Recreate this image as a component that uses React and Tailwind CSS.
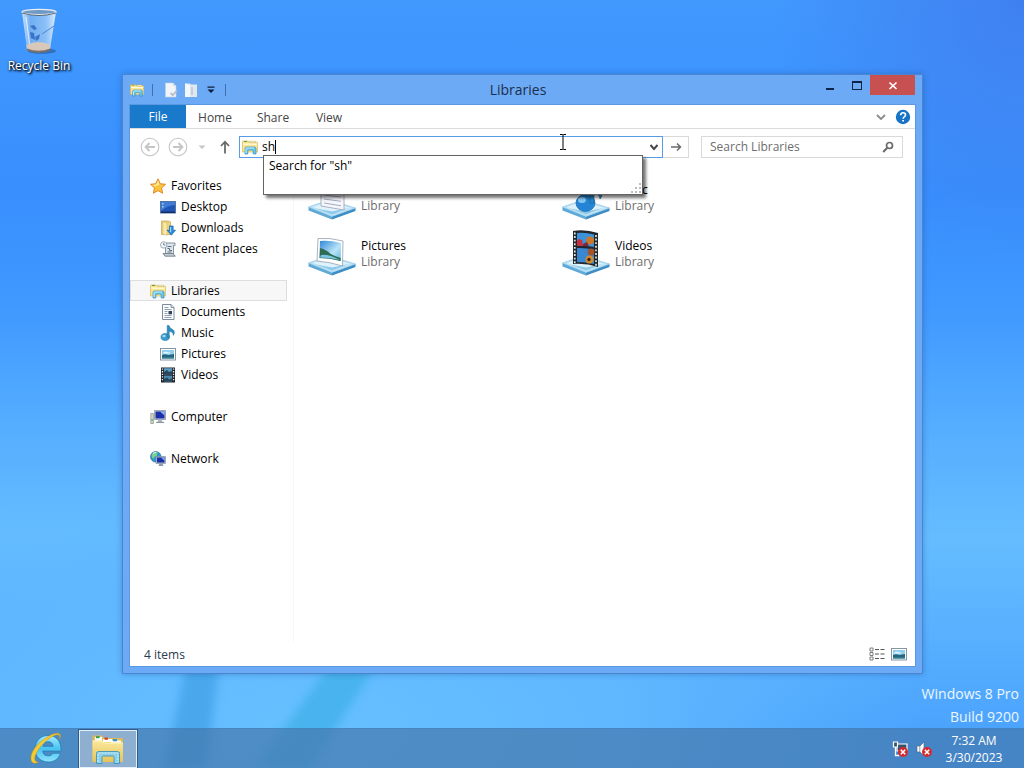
import React, { useState } from "react";

const LibraryIcon = ({ className }) => (
  <svg className={className} viewBox="0 0 16 16" aria-hidden="true">
    <path d="M0.5 13V2.8Q0.5 2 1.3 2H6l1 1.2h7.7q.8 0 .8.8v9z" fill="#fbe48c" stroke="#d3b050" strokeWidth="0.6" />
    <path d="M1.2 5.2h13.6" stroke="#fffbe0" strokeWidth="1.3" />
    <path d="M7 2.2h6.5v1.4H8z" fill="#fff8d2" stroke="#b9a35a" strokeWidth="0.4" />
    <path d="M2 2.5h3" stroke="#52a54a" strokeWidth="1" />
    <path d="M3 15V9.6Q3 8 4.6 8h7.8Q14 8 14 9.6V15h-2.8v-2.8q0-1.2-1.2-1.2H7q-1.2 0-1.2 1.2V15z" fill="#6cc6ee" stroke="#2f8fc0" strokeWidth="0.7" />
    <path d="M4 14V9.8Q4 9 5 9h7" fill="none" stroke="#d0f2ff" strokeWidth="0.9" />
  </svg>
);

const BigFolderIcon = ({ className }) => (
  <svg className={className} viewBox="0 0 34 30" aria-hidden="true">
    <defs>
      <linearGradient id="bigFolder" x1="0" y1="0" x2="0" y2="1">
        <stop offset="0" stopColor="#fbe99c" />
        <stop offset="1" stopColor="#e5c35a" />
      </linearGradient>
    </defs>
    <path d="M1.5 27V2.5Q1.5 1.5 2.5 1.5H11l2 2.5h18q1 0 1 1V27z" fill="#e0bb55" />
    <path d="M4 3h7v4H4z" fill="#fff" />
    <path d="M5 2.2h3.5v2H5z" fill="#2f9c4c" />
    <path d="M12 5h9v3h-9z" fill="#fff" />
    <path d="M13.5 3.5h3.5v2.3h-3.5z" fill="#d0452e" />
    <path d="M20 6.5h10v3H20z" fill="#fff" />
    <path d="M22 5h4v2.3h-4z" fill="#3a93cf" />
    <path d="M1.5 6.5H11l2.5 2h18.5V28H1.5z" fill="url(#bigFolder)" />
    <path d="M2 7h9l2.5 2h18" fill="none" stroke="#fff7c9" strokeWidth="0.8" />
    <path d="M5.5 29.5V19.5q0-2 2-2h19q2 0 2 2v10H23v-6q0-1.5-1.5-1.5h-9Q11 22 11 23.5v6z" fill="#8bd0e8" stroke="#3f94b9" strokeWidth="0.9" />
    <path d="M7 28V20q0-1 1-1h18q1 0 1 1v8" fill="none" stroke="#dff6fc" strokeWidth="0.9" strokeDasharray="2 1" />
  </svg>
);

const StarIcon = () => (
  <svg className="w-4 h-4" viewBox="0 0 16 16" aria-hidden="true">
    <path d="M8 .8l2.2 4.9 5.3.6-3.9 3.6 1 5.3L8 12.6l-4.6 2.6 1-5.3L.5 6.3l5.3-.6z" fill="#fcc23a" stroke="#dc7f1e" strokeWidth="0.9" strokeLinejoin="round" />
    <path d="M8 2.6l1.5 3.9L5 8.5 2.3 6.9l4-.5z" fill="#ffeb9c" />
  </svg>
);

const DesktopIcon = () => (
  <svg className="w-4 h-4" viewBox="0 0 16 16" aria-hidden="true">
    <rect x="0.5" y="2.5" width="15" height="11.5" fill="#1f55b5" stroke="#55749f" />
    <path d="M1 3h14v3Q8 6 1 12z" fill="#3f7cd6" />
    <path d="M1 12.6h14v1.4H1z" fill="#0f2d63" />
    <path d="M2 4h1.5v1.5H2zM2 7h1.5v1.5H2z" fill="#a9cdf5" />
  </svg>
);

const DownloadsIcon = () => (
  <svg className="w-4 h-4" viewBox="0 0 16 16" aria-hidden="true">
    <path d="M1.5 1h7l2 1v12.5h-9z" fill="#ecd27a" stroke="#c3a24a" strokeWidth="0.7" />
    <path d="M3 1.5l4 1.5v12.5l-4-1.5z" fill="#f9eaa9" stroke="#d2b660" strokeWidth="0.5" />
    <path d="M9.5 6h3.6v4.2h2.4l-4.2 5-4.2-5h2.4z" fill="#2f8fe0" stroke="#1a5ea6" strokeWidth="0.7" />
    <path d="M10.6 7v5" stroke="#a8dcff" />
  </svg>
);

const RecentIcon = () => (
  <svg className="w-4 h-4" viewBox="0 0 16 16" aria-hidden="true">
    <path d="M5.5 2h9.5v2.5h-1.5V13H5.5z" fill="#dfe6eb" stroke="#7c8993" strokeWidth="0.9" />
    <path d="M3 12.5h10l2.3 2.7H5z" fill="#c0cad2" stroke="#74818b" strokeWidth="0.9" />
    <path d="M7.5 5.5h4M7.5 7.5h2v2h2.5M7.5 11h4" fill="none" stroke="#5a7485" />
    <circle cx="3.7" cy="3.9" r="3.2" fill="#f6f9fb" stroke="#8998a3" strokeWidth="0.8" />
    <path d="M3.7 2v2h1.6" fill="none" stroke="#4d5b66" strokeWidth="0.8" />
  </svg>
);

const DocumentIcon = () => (
  <svg className="w-4 h-4" viewBox="0 0 16 16" aria-hidden="true">
    <path d="M2.5.5h8.5l3 3v12H2.5z" fill="#fcfdff" stroke="#6f7f93" strokeWidth="0.9" />
    <path d="M11 .5v3h3" fill="#d5deea" stroke="#6f7f93" strokeWidth="0.8" />
    <path d="M4.5 3.5h4M4.5 5.5h7M4.5 7.5h3M4.5 9.5h3M4.5 11.5h7M4.5 13.5h7" stroke="#8795a8" strokeWidth="0.9" />
    <path d="M8.5 7h3.5v3.3H8.5z" fill="#2c4360" />
  </svg>
);

const MusicIcon = () => (
  <svg className="w-4 h-4" viewBox="0 0 16 16" aria-hidden="true">
    <ellipse cx="5.2" cy="12" rx="4.2" ry="3.4" fill="#3b9fd0" stroke="#1f6e9c" strokeWidth="0.6" />
    <path d="M7.2.5h1.8q.5 2.6 3.2 3.8 3.6 1.7 1.2 6.2.2-3.4-4.2-4.2V12.5H7.2z" fill="#2b8fc4" stroke="#1f6e9c" strokeWidth="0.5" />
    <ellipse cx="4" cy="11" rx="1.7" ry="1" fill="#b3e3f8" />
  </svg>
);

const PictureIcon = ({ className }) => (
  <svg className={className} viewBox="0 0 16 16" aria-hidden="true">
    <rect x="0.5" y="2.5" width="15" height="11.5" fill="#fff" stroke="#7b8b99" strokeWidth="0.9" />
    <rect x="2" y="4" width="12" height="8.5" fill="#8fd0ef" />
    <path d="M3 7q2-2 4-1t3 0v1.5H3z" fill="#eaf8ff" />
    <path d="M2 9q3-1.5 6 0 3-.5 6-1v4.500H2z" fill="#27657c" />
    <path d="M2 11.5h12v1H2z" fill="#4796a6" />
  </svg>
);

const VideoIcon = () => (
  <svg className="w-4 h-4" viewBox="0 0 16 16" aria-hidden="true">
    <rect x="1" y="0.5" width="14" height="15" fill="#20262d" />
    <rect x="4" y="1.2" width="8" height="6.2" fill="#5b9cc2" />
    <rect x="4" y="8.6" width="8" height="6.2" fill="#4c87ad" />
    <path d="M4 5l3-2 2 2 3-1v3.4H4zM4 12l3-1.500 2 2 3-1v3.300H4z" fill="#294759" />
    <path d="M2.5 1.5v13M13.5 1.5v13" stroke="#e6ecf0" strokeWidth="1.3" strokeDasharray="1.3 1.3" />
  </svg>
);

const ComputerIcon = () => (
  <svg className="w-4 h-4" viewBox="0 0 16 16" aria-hidden="true">
    <path d="M.8 4.500h2.600v10H.8z" fill="#d3d9cf" stroke="#84907f" strokeWidth="0.7" />
    <path d="M1.2 11h1.8" stroke="#3ca83e" />
    <path d="M4.5 1.5h11v9h-11z" fill="#c8d2dd" stroke="#7c8b9b" strokeWidth="0.7" />
    <path d="M5.5 2.5h9v7h-9z" fill="#1c2fa8" />
    <path d="M10 2.5h4.5v4z" fill="#8db2f4" />
    <path d="M8.5 10.5h3l1.5 3H7z" fill="#aab4c0" />
    <path d="M6 13h8v1H6z" fill="#8793a2" />
  </svg>
);

const NetworkIcon = () => (
  <svg className="w-4 h-4" viewBox="0 0 16 16" aria-hidden="true">
    <circle cx="5.8" cy="5.8" r="5.3" fill="#2f95cf" stroke="#1f6799" strokeWidth="0.6" />
    <path d="M2 3q3-3 6-1.5Q6 3 7 5 4 5 3.5 8 1 6 2 3z" fill="#7bd18a" />
    <path d="M3 2.5q1.5-1.2 3-1" stroke="#e5faff" fill="none" />
    <path d="M6 5.500h9.500v7H6z" fill="#c8d2dd" stroke="#6f7f92" strokeWidth="0.6" />
    <path d="M6.9 6.400h7.700v5.200H6.900z" fill="#1a2ea6" />
    <path d="M11 6.400h3.600v3.600z" fill="#7fa8f2" />
    <path d="M9.500 12.500h3l1 2.500H8.500z" fill="#8d9aab" />
  </svg>
);

// Glass tray that every large library icon stands on
const Tray = () => (
  <>
    <path d="M.5 33L24 42.500v3L.5 36.500z" fill="#5fa9d6" />
    <path d="M24 42.500L47.500 34v3L24 45.500z" fill="#3d8dc4" />
    <path d="M.5 33L21 26l26.500 8L24 42.500z" fill="#bfe3f6" stroke="#7fbde0" strokeWidth="0.6" />
    <path d="M5 33l16-5.500L42 34l-18 6.500z" fill="#dff2fb" />
    <path d="M8 34.500l16 6L41 34l-17 3.500z" fill="#8ac9ea" />
  </>
);

const DocumentsLibraryIcon = () => (
  <svg className="w-12 h-12" viewBox="0 0 48 48" aria-hidden="true">
    <Tray />
    <path d="M13 5l23 2v29l-23-4z" fill="#f5f6fb" stroke="#9a9fb5" strokeWidth="0.8" />
    <path d="M16 13l17 1.5M16 17l17 1.5M16 21l17 2M16 25l17 2.3M16 29l17 2.8" stroke="#a5a9c0" />
  </svg>
);

const MusicLibraryIcon = () => (
  <svg className="w-12 h-12" viewBox="0 0 48 48" aria-hidden="true">
    <Tray />
    <ellipse cx="23.500" cy="29" rx="9.500" ry="8.500" fill="#2485d6" stroke="#1766ab" strokeWidth="0.7" />
    <ellipse cx="20" cy="26" rx="4" ry="3" fill="#86c9f5" />
    <path d="M28 6h4q1 7 6 10 4 4 0 9 0-5-6-6v10h-4z" fill="#2b88c9" stroke="#1b5f94" strokeWidth="0.6" />
  </svg>
);

const PicturesLibraryIcon = () => (
  <svg className="w-12 h-12" viewBox="0 0 48 48" aria-hidden="true">
    <defs>
      <linearGradient id="photoSky" x1="0" y1="0" x2="1" y2="1">
        <stop offset="0" stopColor="#2f86d8" />
        <stop offset="0.6" stopColor="#b9e4f8" />
        <stop offset="1" stopColor="#5fb3dc" />
      </linearGradient>
    </defs>
    <Tray />
    <path d="M10 8.500Q22 7.500 35 11l-.5 25Q22 32 9 31z" fill="#fff" stroke="#8fa0ae" strokeWidth="0.8" />
    <path d="M12 11Q22 10 33 13l-.3 18Q22 28 11.500 28z" fill="url(#photoSky)" />
    <path d="M12 18q7 2 10 5.500 5 3 10.600 4.500v3Q22 28 11.500 28z" fill="#2d6b52" />
    <path d="M13 25q8-1 19 5-9-2.500-20-2.500z" fill="#79c4e0" />
  </svg>
);

const VideosLibraryIcon = () => (
  <svg className="w-12 h-12" viewBox="0 0 48 48" aria-hidden="true">
    <Tray />
    <path d="M11 1q12-2 25 2v34q-12-4-25-3z" fill="#23272d" />
    <path d="M15 3q8-1 17 1.500V17q-8-2-17-1.500z" fill="#3d93db" />
    <path d="M15 18q8-.5 17 1.500v14.500q-8-2-17-2z" fill="#3787d2" />
    <path d="M17 9l3 1 1 6-6-.3v-5z" fill="#c6303c" />
    <circle cx="28" cy="10.500" r="4" fill="#c9772b" />
    <path d="M21 14l4-2 2 4.500-6-.7z" fill="#7a263b" />
    <circle cx="29" cy="22" r="3.500" fill="#a5542a" />
    <circle cx="27.500" cy="29.500" r="4" fill="#d28a2e" />
    <circle cx="27" cy="29.500" r="1.700" fill="#3a2213" />
    <path d="M12.800 2.500v31M34 5v31" stroke="#d9e8e0" strokeWidth="1.700" strokeDasharray="1.900 1.700" />
  </svg>
);

const RecycleBinIcon = () => (
  <svg className="w-12 h-12" viewBox="0 0 48 48" aria-hidden="true">
    <defs>
      <linearGradient id="binGlass" x1="0" y1="0" x2="1" y2="0">
        <stop offset="0" stopColor="#d6e9fb" stopOpacity="0.95" />
        <stop offset="0.25" stopColor="#85b8ee" stopOpacity="0.7" />
        <stop offset="0.7" stopColor="#a5cdf5" stopOpacity="0.75" />
        <stop offset="1" stopColor="#e7f2fc" stopOpacity="0.95" />
      </linearGradient>
    </defs>
    <ellipse cx="27" cy="43" rx="14" ry="3" fill="#23446f" opacity="0.45" />
    <path d="M7 4l5 37q11 5 23 0l6-37z" fill="url(#binGlass)" />
    <path d="M11.500 37q12-6 24 0l-.6 5q-11.500 4.500-23 0z" fill="#d8c8b9" />
    <path d="M11.800 40.500q12 4.500 23.400 0l-.3 2q-11.500 4.500-22.800 0z" fill="#7b6d68" />
    <path d="M15 18l4-1 3 4-3 1zM15 24l4 1 1 7-4-2zM20 29l5-3-1 5-3 2z" fill="#2a63bd" opacity="0.8" />
    <path d="M27 26l12-8" stroke="#4a7fc2" strokeWidth="0.9" />
    <path d="M11 9l3.500 27" stroke="#fff" strokeOpacity="0.7" strokeWidth="1.2" />
    <ellipse cx="24" cy="4" rx="17" ry="2.600" fill="#6f9ac6" stroke="#e9eff4" strokeWidth="1.300" />
    <path d="M7 5q17 5 34 0" fill="none" stroke="#4b5968" strokeWidth="0.9" />
  </svg>
);

const ExplorerEIcon = () => (
  <svg className="w-9 h-9" viewBox="0 0 36 36" aria-hidden="true">
    <defs>
      <linearGradient id="ieBlue" x1="0" y1="0" x2="0" y2="1">
        <stop offset="0" stopColor="#a5ecff" />
        <stop offset="0.5" stopColor="#48c3f2" />
        <stop offset="1" stopColor="#8fe2fc" />
      </linearGradient>
    </defs>
    <path fillRule="evenodd" d="M19 4.500C11 4.500 6 11 6 17.800 6 25.500 11.500 31 19.300 31c6 0 10.400-3 12.200-8.800h-7.600c-1 1.800-2.500 2.600-4.600 2.600-3.300 0-5.300-1.500-5.500-4.800h18.300C32.500 10.500 27.500 4.500 19 4.500zM13.900 15.300c.7-3 2.500-4.600 5.300-4.600 2.700 0 4.500 1.600 5 4.600z" fill="url(#ieBlue)" stroke="#1c7fb8" strokeWidth="0.8" />
    <path d="M30.500 8.500C33.500 2 29 0 20 5 8 11.500 1 21.500 2 28.500c.6 4 4 4.500 7.500 2.700C5 31 4.500 27 8 21 12 13.500 20 6.500 26.500 4c4-1.200 5 1 4 4.500z" fill="#f5cb32" stroke="#c2921a" strokeWidth="0.5" />
  </svg>
);

const navGroups = [
  { label: "Favorites", icon: <StarIcon />, items: [
    { label: "Desktop", icon: <DesktopIcon /> },
    { label: "Downloads", icon: <DownloadsIcon /> },
    { label: "Recent places", icon: <RecentIcon /> },
  ] },
  { label: "Libraries", icon: <LibraryIcon className="w-4 h-4" />, active: true, items: [
    { label: "Documents", icon: <DocumentIcon /> },
    { label: "Music", icon: <MusicIcon /> },
    { label: "Pictures", icon: <PictureIcon className="w-4 h-4" /> },
    { label: "Videos", icon: <VideoIcon /> },
  ] },
  { label: "Computer", icon: <ComputerIcon />, items: [] },
  { label: "Network", icon: <NetworkIcon />, items: [] },
];

const libraries = [
  { name: "Documents", icon: <DocumentsLibraryIcon /> },
  { name: "Music", icon: <MusicLibraryIcon /> },
  { name: "Pictures", icon: <PicturesLibraryIcon /> },
  { name: "Videos", icon: <VideosLibraryIcon /> },
];

const TitleBar = () => (
  <div className="flex h-[30px] shrink-0 items-start">
    <div className="flex h-[30px] w-24 items-center gap-2">
      <LibraryIcon className="w-4 h-4" />
      <span className="w-px h-3 bg-[#3f6fae]" />
      <button type="button" aria-label="Properties" className="ml-0.5">
        <svg className="w-4 h-4" viewBox="0 0 16 16">
          <path d="M2.5 1h7.5l3 3v11H2.5z" fill="#f1f4f8" stroke="#c4d0df" strokeWidth="0.6" />
          <path d="M10 1v3h3" fill="#cfd8e3" />
          <path d="M7.500 11l2.200 2.200L14 8.500" fill="none" stroke="#b4bfcc" strokeWidth="1.8" />
        </svg>
      </button>
      <button type="button" aria-label="New folder" className="-ml-1">
        <svg className="w-4 h-4" viewBox="0 0 16 16">
          <path d="M2 1.5h5l1 1h6V15H2z" fill="#e0e7ef" />
          <path d="M2 1.5l5 1.5v12H2z" fill="#f4f7fa" />
          <path d="M8 5h2v8H8z" fill="#c3cedb" />
        </svg>
      </button>
      <button type="button" aria-label="Customize toolbar">
        <svg className="w-2 h-2" viewBox="0 0 8 8">
          <path d="M.5.5h7v1.200h-7zM.5 3.500h7L4 7z" fill="#0d1e3c" />
        </svg>
      </button>
      <span className="ml-0.5 w-px h-3 shrink-0 bg-[#3f6fae]" />
    </div>
    <h1 className="flex-1 text-center text-sm leading-[30px] text-[#1c2f4a]">Libraries</h1>
    <div className="flex pl-1.5">
      <button type="button" aria-label="Minimize" className="w-[27px] h-5">
        <svg className="mx-auto w-3 h-5" viewBox="0 0 12 20">
          <path d="M2 13h8v2H2z" fill="#0f2547" />
        </svg>
      </button>
      <button type="button" aria-label="Maximize" className="w-[27px] h-5">
        <svg className="mx-auto w-3 h-5" viewBox="0 0 12 20">
          <path fillRule="evenodd" d="M1 6h10v9H1zM2 8v6h8V8z" fill="#0f2547" />
        </svg>
      </button>
      <button type="button" aria-label="Close" className="w-[45px] h-5 bg-[#c75050]">
        <svg className="mx-auto w-3 h-5" viewBox="0 0 12 20">
          <path d="M2.500 7.500l7 6.500M9.500 7.500l-7 6.500" stroke="#fff" strokeWidth="1.700" />
        </svg>
      </button>
    </div>
  </div>
);

const RibbonTabs = () => (
  <div className="flex h-6 shrink-0 items-stretch border-b border-[#dadbdc] text-xs text-[#444]">
    <button type="button" className="w-14 bg-[#1979ca] text-white">File</button>
    <button type="button" className="w-[58px] pt-0.5">Home</button>
    <button type="button" className="w-[58px] pt-0.5">Share</button>
    <button type="button" className="w-[54px] pt-0.5">View</button>
    <div className="ml-auto flex items-center gap-2 pr-1">
      <button type="button" aria-label="Expand the Ribbon">
        <svg className="w-3 h-3" viewBox="0 0 12 12">
          <path d="M2 4l4 4 4-4" fill="none" stroke="#8a8a8a" strokeWidth="1.8" />
        </svg>
      </button>
      <button type="button" aria-label="Help">
        <svg className="w-4 h-4" viewBox="0 0 16 16">
          <circle cx="8" cy="8" r="7.2" fill="#1673c6" />
          <path d="M5.600 6.200Q5.800 3.800 8.100 3.800q2.400 0 2.400 2 0 1.200-1.200 2Q8.100 8.600 8.100 9.800" fill="none" stroke="#fff" strokeWidth="1.6" />
          <path d="M7.200 10.900H9v1.700H7.200z" fill="#fff" />
        </svg>
      </button>
    </div>
  </div>
);

const AddressBar = ({ query, onChange }) => (
  <div className="flex h-9 shrink-0 items-center">
    <button type="button" aria-label="Back" className="ml-2.5">
      <svg className="w-5 h-5" viewBox="0 0 20 20">
        <circle cx="10" cy="10" r="8.8" fill="none" stroke="#c6c6c6" strokeWidth="1.1" />
        <path d="M15 10H6M9.500 6L5.700 10l3.800 4" fill="none" stroke="#c6c6c6" strokeWidth="2" />
      </svg>
    </button>
    <button type="button" aria-label="Forward" className="ml-2">
      <svg className="w-5 h-5" viewBox="0 0 20 20">
        <circle cx="10" cy="10" r="8.8" fill="none" stroke="#c6c6c6" strokeWidth="1.1" />
        <path d="M5 10h9M10.500 6l3.800 4-3.800 4" fill="none" stroke="#c6c6c6" strokeWidth="2" />
      </svg>
    </button>
    <button type="button" aria-label="Recent locations" className="ml-2.5">
      <svg className="w-2 h-2" viewBox="0 0 8 8">
        <path d="M.5 2.500h7L4 6z" fill="#c6c6c6" />
      </svg>
    </button>
    <button type="button" aria-label="Up" className="ml-3">
      <svg className="w-3.5 h-3.5" viewBox="0 0 14 14">
        <path d="M7 13.500V2M3 6l4-4.300L11 6" fill="none" stroke="#6a6a6a" strokeWidth="1.8" />
      </svg>
    </button>
    <div className="relative ml-[7px] flex h-[22px] flex-1 items-center border border-[#569de5] bg-white pl-0.5">
      <LibraryIcon className="w-4 h-4" />
      <input
        type="text"
        aria-label="Address"
        value={query}
        onChange={(e) => onChange(e.target.value)}
        className="ml-1 field-sizing-content text-xs text-black outline-none"
      />
      <span className="w-px h-3.5 bg-black" />
      <button type="button" aria-label="Previous locations" className="ml-auto mr-0.5">
        <svg className="w-3 h-3" viewBox="0 0 12 12">
          <path d="M2.500 4L6 8l3.500-4" fill="none" stroke="#444" strokeWidth="1.900" />
        </svg>
      </button>

      {/* Suggestions */}
      <div className="absolute left-[23px] right-[19px] top-[18px] z-20 h-10 border border-[#646464] bg-white px-[5px] text-xs leading-5 text-black shadow-[3px_3px_3px_rgba(0,0,0,0.55)]">
        Search for "{query}"
        <svg className="absolute bottom-0 right-0 w-3 h-3" viewBox="0 0 12 12" aria-hidden="true">
          <path d="M9 1h2v2H9zM9 5h2v2H9zM9 9h2v2H9zM5 5h2v2H5zM5 9h2v2H5zM1 9h2v2H1z" fill="#bdbdbd" />
        </svg>
      </div>
    </div>
    <button type="button" aria-label="Go" className="flex h-[22px] w-[26px] items-center justify-center border border-l-0 border-[#d9d9d9]">
      <svg className="w-3 h-3" viewBox="0 0 12 12">
        <path d="M1 6h9.500M7 2.500L10.500 6 7 9.500" fill="none" stroke="#6a6a6a" strokeWidth="1.500" />
      </svg>
    </button>
    <div className="ml-3 mr-3 flex h-[22px] w-[202px] items-center border border-[#d9d9d9] px-2">
      <input type="text" aria-label="Search Libraries" placeholder="Search Libraries" className="min-w-0 flex-1 text-xs outline-none placeholder:text-[#6d6d6d]" />
      <svg className="w-3 h-3" viewBox="0 0 12 12" aria-hidden="true">
        <circle cx="7.500" cy="4.500" r="3" fill="none" stroke="#6a6a6a" strokeWidth="1.700" />
        <path d="M5.300 6.800L1.200 11" stroke="#6a6a6a" strokeWidth="2" />
      </svg>
    </div>
  </div>
);

const NavPane = () => (
  <nav className="flex w-[164px] shrink-0 flex-col gap-[21px] border-r border-[#f7f7f7] pt-2.5 text-xs text-black">
    {navGroups.map((group) => (
      <ul key={group.label}>
        <li className={group.active ? "mr-1.5 bg-[#f7f7f7] outline outline-1 -outline-offset-1 outline-[#dedede]" : "mr-1.5"}>
          <a href="#" className="flex h-[21px] items-center gap-[5px] pl-5">
            {group.icon}
            {group.label}
          </a>
        </li>
        {group.items.map((item) => (
          <li key={item.label}>
            <a href="#" className="flex h-[21px] items-center gap-[5px] pl-[30px]">
              {item.icon}
              {item.label}
            </a>
          </li>
        ))}
      </ul>
    ))}
  </nav>
);

const ExplorerWindow = () => {
  const [query, setQuery] = useState("sh");

  return (
    <section className="absolute bottom-[94px] left-[122px] right-[101px] top-[74px] flex flex-col border border-[#4a86cf] bg-[#6daaf6] px-[7px] pb-[7px] shadow-[0_0_6px_rgba(20,60,130,0.35)]">
      <TitleBar />
      <div className="flex min-h-0 flex-1 flex-col bg-white outline outline-1 outline-[#5b98e2]">
        <RibbonTabs />
        <AddressBar query={query} onChange={setQuery} />
        <div className="flex min-h-0 flex-1">
          <NavPane />
          <main className="flex-1 pl-3.5 pt-[5px]">
            <ul className="grid grid-cols-[repeat(auto-fill,254px)]">
              {libraries.map((lib) => (
                <li key={lib.name} className="flex h-14 items-center gap-[5px]">
                  {lib.icon}
                  <div className="text-xs leading-4">
                    <p className="text-black">{lib.name}</p>
                    <p className="text-[#6d6d6d]">Library</p>
                  </div>
                </li>
              ))}
            </ul>
          </main>
        </div>
        <footer className="flex h-6 shrink-0 items-center gap-1.5 pl-3.5 pr-2 text-xs text-[#2b3a4d]">
          <span className="mr-auto pt-0.5">4 items</span>
          <button type="button" aria-label="Details view">
            <svg className="w-4 h-4" viewBox="0 0 16 16">
              <path d="M1 2h3v3H1zM1 6.500h3v3H1zM1 11h3v3H1z" fill="none" stroke="#707070" strokeWidth="0.9" />
              <path d="M6 3.500h4M11.500 3.500h4M6 8h4M11.500 8h4M6 12.500h4M11.500 12.500h4" stroke="#555" />
            </svg>
          </button>
          <button type="button" aria-label="Large icons view">
            <PictureIcon className="w-4 h-4" />
          </button>
        </footer>
      </div>
    </section>
  );
};

const Taskbar = () => (
  <footer className="absolute inset-x-0 bottom-0 flex h-10 items-center border-t border-[#4382c2]/60 bg-[#4578ac]/70">
    <button type="button" aria-label="Internet Explorer" className="ml-[29px]">
      <ExplorerEIcon />
    </button>
    <button type="button" aria-label="File Explorer" className="ml-3.5 flex h-[38px] w-[58px] items-center justify-center border border-[#e3eff9] bg-[#a0b8d2]/80 outline outline-1 outline-[#2f5c8c]">
      <BigFolderIcon className="w-[34px] h-[30px]" />
    </button>
    <div className="ml-auto flex items-center gap-1.5 pr-3.5">
      <svg className="w-4 h-4" viewBox="0 0 16 16" role="img" aria-label="Network disconnected">
        <path d="M5 3h10v7H5z" fill="#35546f" stroke="#fff" strokeWidth="1.200" />
        <path d="M1.500 1h4v5h-4z" fill="#35546f" stroke="#fff" strokeWidth="1.200" />
        <path d="M3.500 6v8.500h4" fill="none" stroke="#fff" strokeWidth="1.300" />
        <circle cx="11" cy="11" r="5" fill="#d42a2f" />
        <path d="M8.800 8.800l4.400 4.400M13.200 8.800l-4.400 4.400" stroke="#fff" strokeWidth="1.600" />
      </svg>
      <svg className="ml-0.5 w-4 h-4" viewBox="0 0 16 16" role="img" aria-label="Sound muted">
        <path d="M1 5h3l4-4v14l-4-4H1z" fill="#fff" stroke="#41617f" strokeWidth="0.6" />
        <path d="M3.800 5v6" stroke="#6b88a3" strokeWidth="0.8" />
        <circle cx="11" cy="11" r="5" fill="#d42a2f" />
        <path d="M8.800 8.800l4.400 4.400M13.200 8.800l-4.400 4.400" stroke="#fff" strokeWidth="1.600" />
      </svg>
      <div className="w-[72px] text-center text-xs leading-[17px] text-white">
        <p>7:32 AM</p>
        <p>3/30/2023</p>
      </div>
    </div>
  </footer>
);

const Wallpaper = () => (
  <div className="absolute inset-0 overflow-hidden bg-[linear-gradient(to_bottom,#4199fe_0%,#388ffe_25%,#3f99ff_40%,#55adff_55%,#65bdff_70%,#58b0ff_83%,#4ba3fd_95%)]">
    <div className="absolute inset-0 bg-[radial-gradient(ellipse_60%_35%_at_30%_95%,#66c0ff_0%,#60b8ff_50%,transparent_100%)]" />
    <div className="absolute inset-0 bg-[radial-gradient(ellipse_25%_35%_at_100%_0%,#3f80f0_0%,transparent_100%)]" />
    <svg className="absolute bottom-0 left-[160px] h-32 w-[260px] blur-[5px]" viewBox="0 0 260 128" aria-hidden="true">
      <path d="M32 0h30L46 128H4z" fill="#4aa7ec" />
      <path d="M188 0h44L150 128H96z" fill="#48b3ee" />
    </svg>
  </div>
);

export default function App() {
  return (
    <div className="relative h-screen w-full overflow-hidden font-['Open_Sans','Noto_Sans',sans-serif]">
      <Wallpaper />
      <a href="#" className="absolute left-0 top-2 flex w-[78px] flex-col items-center gap-0.5 text-xs text-white [text-shadow:1px_1px_2px_#000,1px_1px_3px_#000]">
        <RecycleBinIcon />
        Recycle Bin
      </a>
      <ExplorerWindow />
      <div className="absolute bottom-10 right-[5px] text-right text-sm leading-[23px] text-white/90">
        <p>Windows 8 Pro</p>
        <p>Build 9200</p>
      </div>
      <Taskbar />
      <svg className="absolute left-[559px] top-[134px] z-30 h-4 w-2" viewBox="0 0 8 16" aria-hidden="true">
        <path d="M1 .5h2.500L4 1l.5-.5H7M4 1v14M1 15.500h2.500L4 15l.5.5H7" fill="none" stroke="#000" />
      </svg>
    </div>
  );
}
